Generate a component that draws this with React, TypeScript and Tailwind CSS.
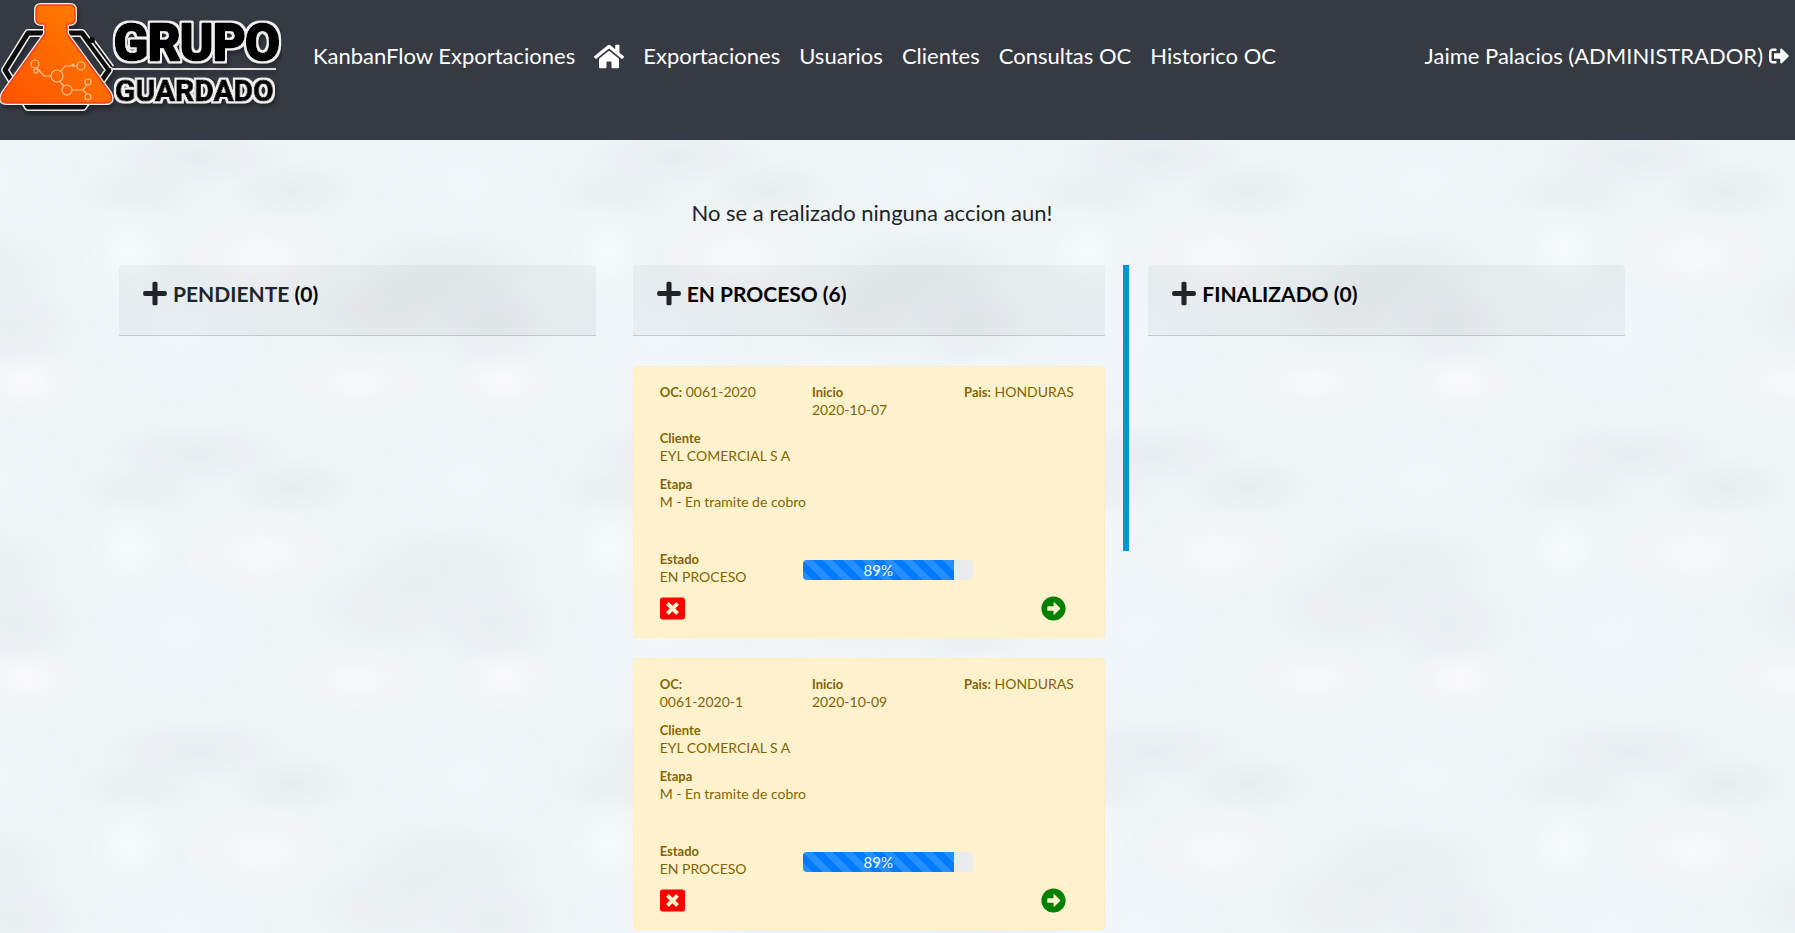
import type { ReactNode } from "react";
import {
  FaArrowAltCircleRight,
  FaHome,
  FaPlus,
  FaSignOutAlt,
  FaWindowClose,
} from "react-icons/fa";

type Order = {
  oc: string;
  start: string;
  country: string;
  client: string;
  stage: string;
  status: string;
  progress: number;
};

const orders: Order[] = [
  {
    oc: "0061-2020",
    start: "2020-10-07",
    country: "HONDURAS",
    client: "EYL COMERCIAL S A",
    stage: "M - En tramite de cobro",
    status: "EN PROCESO",
    progress: 89,
  },
  {
    oc: "0061-2020-1",
    start: "2020-10-09",
    country: "HONDURAS",
    client: "EYL COMERCIAL S A",
    stage: "M - En tramite de cobro",
    status: "EN PROCESO",
    progress: 89,
  },
];

const links = ["Exportaciones", "Usuarios", "Clientes", "Consultas OC", "Historico OC"];

function Logo() {
  const flask =
    "M41 5H70Q75 5 75 10V19Q75 24 69 24H67V34L110 93Q115 103 105 103H7Q-2 103 3 93L45 34V24H42Q36 24 36 19V10Q36 5 41 5Z";
  const hexagon = "M28 33H82L109 70L83 107H28L5 70Z";
  return (
    <svg viewBox="0 0 282 116" className="h-[116px] w-[282px] shrink-0" aria-label="Grupo Guardado">
      <defs>
        <linearGradient id="flask" x1="0" y1="1" x2="1" y2="0">
          <stop offset="0" stopColor="#ff5200" />
          <stop offset="1" stopColor="#ff8200" />
        </linearGradient>
        <filter id="shade" x="-10%" y="-10%" width="120%" height="130%">
          <feDropShadow dx="2" dy="4" stdDeviation="2" floodColor="#000" floodOpacity="0.35" />
        </filter>
        <filter id="outline" x="-10%" y="-20%" width="120%" height="150%">
          <feMorphology in="SourceAlpha" operator="dilate" radius="1.5" result="wide" />
          <feFlood floodColor="#f1f1f1" />
          <feComposite in2="wide" operator="in" result="edge" />
          <feMerge result="word">
            <feMergeNode in="edge" />
            <feMergeNode in="SourceGraphic" />
          </feMerge>
          <feDropShadow in="word" dx="2" dy="3" stdDeviation="2" floodColor="#000" floodOpacity="0.35" />
        </filter>
      </defs>
      <g filter="url(#shade)" strokeLinejoin="round">
        <path d={hexagon} fill="none" stroke="#f1f1f1" strokeWidth="8" />
        <path d={hexagon} fill="none" stroke="#111" strokeWidth="5" />
        <path d="M92 40L112 67" stroke="#f1f1f1" strokeWidth="5" />
        <path d="M92 40L112 67" stroke="#111" strokeWidth="2" />
        <circle cx="92" cy="40" r="3" fill="#111" />
        <path d="M111 69H276" stroke="#ddd" strokeWidth="2" />
        <path d={flask} fill="#f1f1f1" stroke="#f1f1f1" strokeWidth="4" />
        <path d={flask} fill="url(#flask)" stroke="#ff3d14" strokeWidth="1.5" />
      </g>
      <g fill="none" stroke="#ffc28f" strokeWidth="1.2">
        <circle cx="35" cy="64" r="4" />
        <circle cx="36" cy="71" r="2" />
        <circle cx="57" cy="76" r="6" />
        <circle cx="81" cy="66" r="4" />
        <circle cx="73" cy="65" r="1" />
        <circle cx="67" cy="90" r="5" />
        <circle cx="88" cy="82" r="3" />
        <circle cx="88" cy="97" r="3" />
        <path d="M37 68L44 76H51M61 71L65 66H77M60 82L64 86M72 90H83L87 85M83 90L87 94" />
      </g>
      <g
        fill="#050505"
        stroke="#050505"
        strokeLinejoin="round"
        fontWeight="700"
        className="font-['Roboto',sans-serif]"
        filter="url(#outline)"
      >
        <text x="114" y="60" fontSize="50" strokeWidth="3">GRUPO</text>
        <text x="115" y="101" fontSize="30" strokeWidth="1">GUARDADO</text>
      </g>
    </svg>
  );
}

function Column({ title, count, muted, active, children }: {
  title: string;
  count: number;
  muted?: boolean;
  active?: boolean;
  children?: ReactNode;
}) {
  return (
    <section className={active ? "h-[286px] border-r-6 border-[#0795d1] px-[18px]" : "h-[286px] px-[19px]"}>
      <header className="flex h-[71px] items-start gap-1.5 rounded-t border-b border-black/15 bg-black/[0.035] px-6 pt-[15px]">
        <button type="button" aria-label={`Agregar a ${title}`} className="text-[#212529]">
          <FaPlus className="h-[27px] w-6" />
        </button>
        <h2 className="text-[21px] leading-[27px] font-bold text-black">
          <span className={muted ? "text-[#212529]" : "text-black"}>{title}</span> ({count})
        </h2>
      </header>
      {children}
    </section>
  );
}

function OrderCard({ order }: { order: Order }) {
  return (
    <article className="rounded border border-[#ffeeba] bg-[#fff2cd] px-[26px] py-4 text-[14px] leading-[18px] text-[#856404]">
      <div className="grid grid-cols-3 gap-[38px]">
        <p className="pr-3">
          <b className="text-[13px]">OC:</b> <span className="inline-block">{order.oc}</span>
        </p>
        <p>
          <b className="block text-[13px]">Inicio</b>
          {order.start}
        </p>
        <p className="whitespace-nowrap">
          <b className="text-[13px]">Pais:</b> {order.country}
        </p>
      </div>
      <p className="mt-2.5">
        <b className="block text-[13px]">Cliente</b>
        {order.client}
      </p>
      <p className="mt-2.5">
        <b className="block text-[13px]">Etapa</b>
        {order.stage}
      </p>
      <div className="mt-[39px] flex items-end pb-0.5">
        <p className="w-[143px]">
          <b className="block text-[13px]">Estado</b>
          {order.status}
        </p>
        <div
          role="progressbar"
          aria-label="Avance"
          aria-valuenow={order.progress}
          className="mb-1.5 h-5 w-[170px] overflow-hidden rounded bg-[#e9ecef]"
        >
          <div
            className="h-full bg-[#007bff] bg-[linear-gradient(45deg,rgba(255,255,255,0.15)_25%,transparent_25%,transparent_50%,rgba(255,255,255,0.15)_50%,rgba(255,255,255,0.15)_75%,transparent_75%,transparent)] bg-size-[20px_20px] text-center text-[15px] leading-5 text-white"
            style={{ width: `${order.progress}%` }}
          >
            {order.progress}%
          </div>
        </div>
      </div>
      <div className="mt-2 flex items-center justify-between pr-3">
        <button type="button" aria-label="Cancelar" className="text-[#ff0000]">
          <FaWindowClose className="size-[25px]" />
        </button>
        <button type="button" aria-label="Avanzar" className="text-[#008000]">
          <FaArrowAltCircleRight className="size-[25px]" />
        </button>
      </div>
    </article>
  );
}

export default function App() {
  return (
    <div className="flex min-h-screen flex-col font-['Lato','Liberation_Sans',sans-serif] text-[#212529]">
      <nav className="flex h-[140px] items-start bg-[#363a43] pr-1.5 text-[22px] leading-7 text-white">
        <Logo />
        <div className="flex h-[112px] flex-1 items-center gap-[19px] pl-[31px] whitespace-nowrap">
          <a href="#inicio">KanbanFlow Exportaciones</a>
          <a href="#home" aria-label="Inicio">
            <FaHome className="h-[27px] w-[30px]" />
          </a>
          {links.map((link) => (
            <a key={link} href="#seccion">
              {link}
            </a>
          ))}
          <a href="#salir" className="ml-auto flex items-center gap-1.5">
            Jaime Palacios (ADMINISTRADOR)
            <FaSignOutAlt className="size-5" />
          </a>
        </div>
      </nav>
      <main className="flex-1 bg-[#eff4f7] bg-[radial-gradient(90px_30px_at_117px_37px,rgba(140,145,155,0.08),transparent),radial-gradient(60px_26px_at_60px_72px,rgba(130,140,125,0.05),transparent),radial-gradient(60px_28px_at_212px_70px,rgba(130,140,125,0.07),transparent),radial-gradient(80px_44px_at_181px_136px,rgba(250,250,251,0.8),transparent),radial-gradient(50px_50px_at_50px_131px,rgba(248,252,252,0.8),transparent),radial-gradient(80px_44px_at_312px_190px,rgba(140,145,150,0.06),transparent),radial-gradient(62px_46px_at_412px_205px,rgba(140,145,155,0.07),transparent),radial-gradient(90px_42px_at_366px_151px,rgba(130,145,125,0.06),transparent),radial-gradient(70px_32px_at_277px_262px,rgba(250,250,251,0.8),transparent),radial-gradient(50px_32px_at_424px_262px,rgba(251,250,252,0.9),transparent),radial-gradient(90px_60px_at_388px_62px,rgba(243,248,251,0.9),transparent),radial-gradient(90px_70px_at_100px_215px,rgba(242,248,251,0.9),transparent)] bg-size-[478px_297px] bg-position-[80px_-20px] pr-[151px] pl-[100px]">
        <p className="pt-[59px] text-center text-[22px] leading-7">No se a realizado ninguna accion aun!</p>
        <div className="mt-[38px] grid grid-cols-3">
          <Column title="PENDIENTE" count={0} muted />
          <Column title="EN PROCESO" count={6} active>
            <div className="flex flex-col gap-5 pt-[30px]">
              {orders.map((order) => (
                <OrderCard key={order.oc} order={order} />
              ))}
            </div>
          </Column>
          <Column title="FINALIZADO" count={0} />
        </div>
      </main>
    </div>
  );
}
